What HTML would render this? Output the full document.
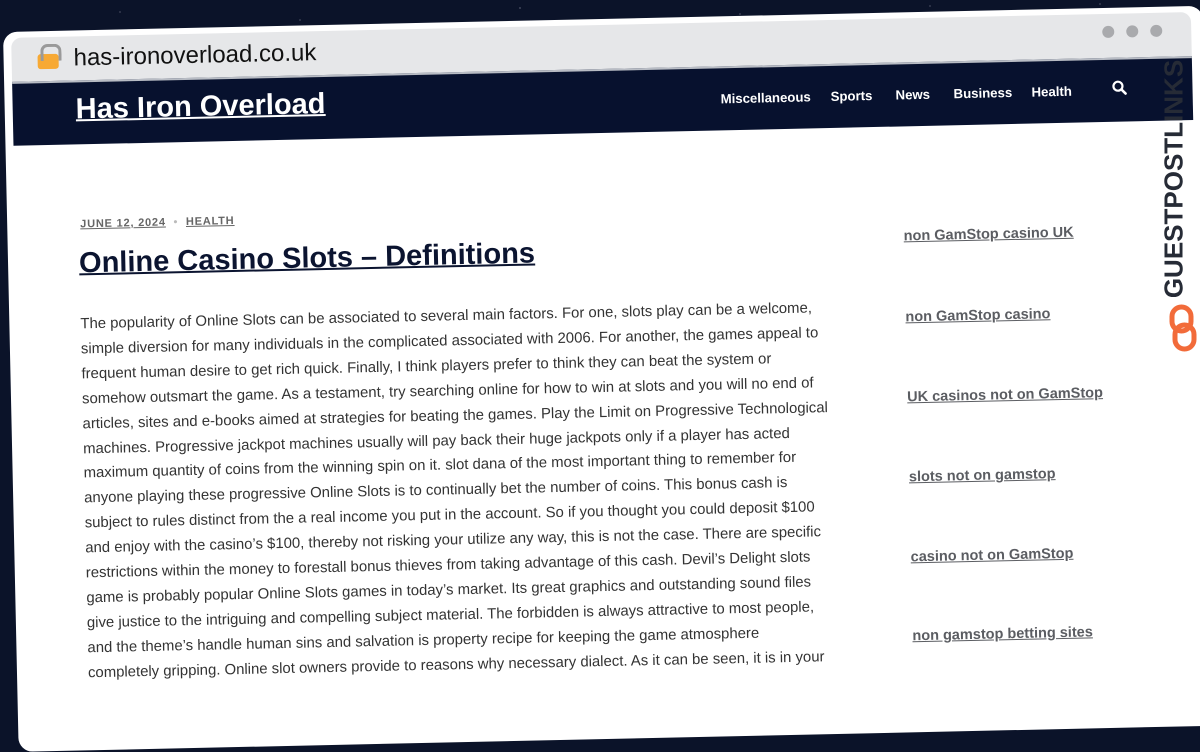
<!DOCTYPE html>
<html><head><meta charset="utf-8"><style>
*{margin:0;padding:0;box-sizing:border-box}
html,body{width:1200px;height:670px;overflow:hidden;background:#0b1329;font-family:"Liberation Sans",sans-serif}
.stars{position:absolute;left:0;top:0;width:1200px;height:60px;background-image:radial-gradient(1px 1px at 120px 12px,#889 50%,transparent 51%),radial-gradient(1px 1px at 300px 20px,#889 50%,transparent 51%),radial-gradient(1px 1px at 520px 8px,#aab 50%,transparent 51%),radial-gradient(1px 1px at 740px 14px,#889 50%,transparent 51%),radial-gradient(1px 1px at 930px 6px,#889 50%,transparent 51%),radial-gradient(1px 1px at 1100px 4px,#889 50%,transparent 51%)}
.win{position:absolute;left:3px;top:32px;width:1200px;height:720px;background:#fff;border-radius:14px;transform:rotate(-1.25deg);transform-origin:0 0;overflow:hidden}
.bar{position:absolute;left:8px;top:6px;right:12px;height:44px;background:#e6e7e9;border-radius:10px 10px 0 0}
.lock{position:absolute;left:26px;top:17px;width:21px;height:15px;background:#f7a934;border-radius:3px}
.lock:before{content:"";position:absolute;left:3px;top:-10px;width:15px;height:14px;border:3px solid #9a9a9a;border-bottom:none;border-radius:7px 7px 0 0}
.url{position:absolute;left:62px;top:8px;font-size:24px;color:#111}
.dot{position:absolute;top:12px;width:12px;height:12px;border-radius:50%;background:#a9aaad}
.head{position:absolute;left:8px;top:50px;right:12px;height:64px;background:#07112e;border-top:2px solid #b8bcc4}
.title{position:absolute;left:63px;top:11px;font-size:29px;font-weight:bold;color:#fff;text-decoration:underline;text-decoration-thickness:2px}
.nav{position:absolute;top:23px;font-size:13.2px;font-weight:bold;color:#fff}
.meta{position:absolute;left:73px;top:188px;font-size:11px;font-weight:bold;color:#666;letter-spacing:.8px}
.meta u{text-decoration:underline}
h1{position:absolute;left:71px;top:217px;font-size:29px;color:#0b1430;text-decoration:underline;text-decoration-thickness:2px;white-space:nowrap}
.p{position:absolute;left:71px;top:282px;font-size:14.9px;line-height:24.9px;color:#333;white-space:nowrap}
.side{position:absolute;left:896px;font-size:14.5px;font-weight:bold;color:#5b5d62;text-decoration:underline}
.logo{position:absolute;left:1150px;top:58px;width:48px;height:242px}
.logo span{position:absolute;left:50%;top:50%;transform:translate(-50%,-50%) rotate(-90deg);font-size:26px;font-weight:900;color:#262b36;white-space:nowrap}
</style></head><body>
<div class="stars"></div>
<div class="win">
 <div class="bar"><div class="lock"></div><div class="url">has-ironoverload.co.uk</div>
  <div class="dot" style="left:1091px"></div><div class="dot" style="left:1115px"></div><div class="dot" style="left:1139px"></div></div>
 <div class="head"><div class="title">Has Iron Overload</div>
  <div class="nav" style="left:708px">Miscellaneous</div>
  <div class="nav" style="left:818px">Sports</div>
  <div class="nav" style="left:883px">News</div>
  <div class="nav" style="left:941px">Business</div>
  <div class="nav" style="left:1019px">Health</div>
  <svg class="nav" style="left:1099px;top:20px" width="16" height="16" viewBox="0 0 16 16"><circle cx="6.5" cy="6.5" r="4.5" fill="none" stroke="#fff" stroke-width="2.2"/><path d="M10 10l4 4" stroke="#fff" stroke-width="2.6" stroke-linecap="round"/></svg>
 </div>
 <div class="meta"><u>JUNE 12, 2024</u> <span style="color:#bbb">&nbsp;•&nbsp;</span> <u>HEALTH</u></div>
 <h1>Online Casino Slots – Definitions</h1>
 <div class="p">The popularity of Online Slots can be associated to several main factors. For one, slots play can be a welcome,<br>simple diversion for many individuals in the complicated associated with 2006. For another, the games appeal to<br>frequent human desire to get rich quick. Finally, I think players prefer to think they can beat the system or<br>somehow outsmart the game. As a testament, try searching online for how to win at slots and you will no end of<br>articles, sites and e-books aimed at strategies for beating the games. Play the Limit on Progressive Technological<br>machines. Progressive jackpot machines usually will pay back their huge jackpots only if a player has acted<br>maximum quantity of coins from the winning spin on it. slot dana of the most important thing to remember for<br>anyone playing these progressive Online Slots is to continually bet the number of coins. This bonus cash is<br>subject to rules distinct from the a real income you put in the account. So if you thought you could deposit $100<br>and enjoy with the casino’s $100, thereby not risking your utilize any way, this is not the case. There are specific<br>restrictions within the money to forestall bonus thieves from taking advantage of this cash. Devil’s Delight slots<br>game is probably popular Online Slots games in today’s market. Its great graphics and outstanding sound files<br>give justice to the intriguing and compelling subject material. The forbidden is always attractive to most people,<br>and the theme’s handle human sins and salvation is property recipe for keeping the game atmosphere<br>completely gripping. Online slot owners provide to reasons why necessary dialect. As it can be seen, it is in your</div>
 <div class="side" style="top:216px">non GamStop casino UK</div>
 <div class="side" style="top:297px">non GamStop casino</div>
 <div class="side" style="top:377px">UK casinos not on GamStop</div>
 <div class="side" style="top:457px">slots not on gamstop</div>
 <div class="side" style="top:537px">casino not on GamStop</div>
 <div class="side" style="top:616px">non gamstop betting sites</div>
</div>
<div class="logo"><span>GUESTPOSTLINKS</span></div>
<svg style="position:absolute;left:1169px;top:304px" width="28" height="48" viewBox="0 0 28 48"><rect x="3" y="3" width="19" height="24" rx="9.5" fill="none" stroke="#f26b3a" stroke-width="5"/><rect x="6" y="21" width="19" height="24" rx="9.5" fill="none" stroke="#f26b3a" stroke-width="5"/></svg>
</body></html>
